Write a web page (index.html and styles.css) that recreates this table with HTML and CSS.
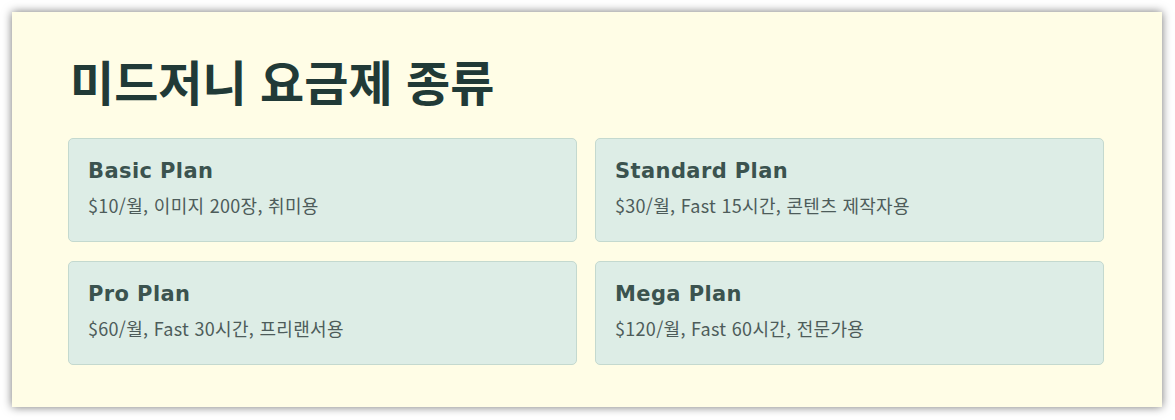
FILE: index.html
```html
<!DOCTYPE html>
<html lang="ko">
<head>
<meta charset="utf-8">
<title>미드저니 요금제 종류</title>
<link rel="stylesheet" href="styles.css">
</head>
<body>
<section class="panel">
  <h1 class="title">미드저니 요금제 종류</h1>
  <div class="grid">
    <div class="card">
      <h2 class="card-title">Basic Plan</h2>
      <p class="card-desc">$10/월, 이미지 200장, 취미용</p>
    </div>
    <div class="card">
      <h2 class="card-title">Standard Plan</h2>
      <p class="card-desc">$30/월, Fast 15시간, 콘텐츠 제작자용</p>
    </div>
    <div class="card">
      <h2 class="card-title">Pro Plan</h2>
      <p class="card-desc">$60/월, Fast 30시간, 프리랜서용</p>
    </div>
    <div class="card">
      <h2 class="card-title">Mega Plan</h2>
      <p class="card-desc">$120/월, Fast 60시간, 전문가용</p>
    </div>
  </div>
</section>
</body>
</html>
```
FILE: styles.css
```css
html, body {
  margin: 0;
  padding: 0;
  background: #ffffff;
}
body {
  padding: 12px 13px 13px 12px;
  font-family: "Noto Sans CJK KR", "Noto Sans", sans-serif;
}
.panel {
  background: #fffde6;
  box-shadow: 0 0 9px rgba(0, 0, 0, 0.55);
  padding: 38px 58px 41px 56px;
  height: 395px;
  box-sizing: border-box;
}
.title {
  margin: 0 0 28px 0;
  font-family: "Noto Sans CJK KR", sans-serif;
  font-weight: 700;
  font-size: 48px;
  line-height: 60px;
  color: #213a37;
  padding-left: 2px;
}
.grid {
  display: grid;
  grid-template-columns: 1fr 1fr;
  column-gap: 18px;
  row-gap: 19px;
}
.card {
  background: #ddede6;
  border: 1px solid #c4d9cf;
  border-radius: 5px;
  padding: 18px 19px 0 19px;
  height: 104px;
  box-sizing: border-box;
}
.card-title {
  margin: 0;
  font-family: "DejaVu Sans", sans-serif;
  font-weight: 700;
  font-size: 21px;
  line-height: 28px;
  letter-spacing: 0.4px;
  color: #3b534f;
}
.card-desc {
  margin: 8px 0 0 0;
  font-family: "Noto Sans CJK KR", sans-serif;
  font-size: 18px;
  line-height: 24px;
  letter-spacing: 0.3px;
  color: #4d5c5a;
}
```
